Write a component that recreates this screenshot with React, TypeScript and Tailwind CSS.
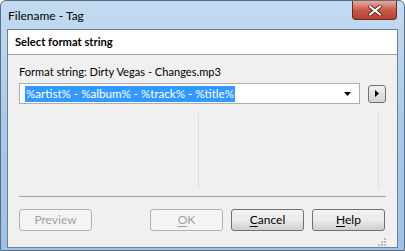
import React from "react";

const font = { fontFamily: 'Lato, "Noto Sans", "Liberation Sans", sans-serif' };

function Btn({ label, u, disabled }: { label: string; u?: number; disabled?: boolean }) {
  const pre = u === undefined ? label : label.slice(0, u);
  const mid = u === undefined ? "" : label[u];
  const post = u === undefined ? "" : label.slice(u + 1);
  return (
    <div
      className={
        "flex h-[22px] w-[73px] items-center justify-center rounded-[3px] border text-[12px] " +
        (disabled
          ? "border-[#adb2b5] bg-[#f4f4f4] text-[#a0a0a0]"
          : "border-[#707070] bg-gradient-to-b from-[#f2f2f2] via-[#ebebeb] to-[#cfcfcf] text-black")
      }
    >
      <span>
        {pre}
        {mid && <span className="underline underline-offset-2">{mid}</span>}
        {post}
      </span>
    </div>
  );
}

export default function App() {
  return (
    <div
      className="flex h-[251px] w-[405px] flex-col overflow-hidden rounded-t-[6px] border border-[#5a6e83] bg-gradient-to-b from-[#c3dbf1] via-[#a9c9e9] to-[#9ec2e6] px-[6px] pb-[2px]"
      style={font}
    >
      {/* Title bar */}
      <div className="flex h-[28px] shrink-0 items-start justify-between">
        <span className="mt-[6px] pl-[1px] text-[12px] text-black">Filename - Tag</span>
        <div className="mr-[1px] flex h-[19px] w-[45px] items-center justify-center rounded-b-[4px] border border-t-0 border-[#6b2a24] bg-gradient-to-b from-[#e9a99c] via-[#c75a48] to-[#b9412f]">
          <svg width="14" height="11" viewBox="0 0 14 11">
            <path d="M2 1.5 L12 9.5 M12 1.5 L2 9.5" stroke="#5a1d15" strokeWidth="3.6" strokeLinecap="round" />
            <path d="M2 1.5 L12 9.5 M12 1.5 L2 9.5" stroke="#ffffff" strokeWidth="2.2" strokeLinecap="round" />
          </svg>
        </div>
      </div>

      {/* Client area */}
      <div className="flex flex-1 flex-col border border-[#6e8193] bg-[#f0f0f0]">
        <div className="flex h-[25px] shrink-0 items-center border-b border-[#a0a0a0] bg-white pl-[7px] text-[11.2px] font-bold text-black">
          Select format string
        </div>

        <div className="flex flex-1 flex-col px-[11px] pt-[9px]">
          <div className="text-[11.1px] leading-[16px] text-black">
            Format string: Dirty Vegas - Changes.mp3
          </div>
          <div className="mt-[3px] flex items-center gap-[8px]">
            <div className="flex h-[21px] w-[341px] items-center border border-[#abadb3] bg-white pl-[5px] pr-[8px]">
              <span className="bg-[#3399ff] px-[1px] text-[11.6px] leading-[16px] text-white">
                %artist% - %album% - %track% - %title%
              </span>
              <span className="flex-1" />
              <svg width="7" height="4" viewBox="0 0 7 4">
                <path d="M0 0 H7 L3.5 4 Z" fill="#000" />
              </svg>
            </div>
            <div className="flex h-[18px] w-[18px] items-center justify-center rounded-[3px] border border-[#707070] bg-gradient-to-b from-[#f2f2f2] to-[#d4d4d4]">
              <svg width="4" height="7" viewBox="0 0 4 7">
                <path d="M0 0 V7 L4 3.5 Z" fill="#000" />
              </svg>
            </div>
          </div>

          <div className="mt-[9px] flex h-[76px] pl-[179px]">
            <div className="w-[180px] border-l border-[#dcdfe6]" />
            <div className="border-l border-[#dcdfe6]" />
          </div>

          <div className="mt-[7px] border-t border-[#a0a0a0]" />

          <div className="mt-[12px] flex items-center">
            <Btn label="Preview" disabled />
            <div className="flex-1" />
            <div className="flex gap-[8px] pr-[1px]">
              <Btn label="OK" u={0} disabled />
              <Btn label="Cancel" u={0} />
              <Btn label="Help" u={0} />
            </div>
          </div>
          <div className="flex flex-1 items-end justify-end pb-[1px]">
            <svg width="9" height="9" viewBox="0 0 9 9">
              <g fill="#b8bcc2">
                <rect x="7" y="1" width="2" height="2" />
                <rect x="4" y="4" width="2" height="2" />
                <rect x="7" y="4" width="2" height="2" />
                <rect x="1" y="7" width="2" height="2" />
                <rect x="4" y="7" width="2" height="2" />
                <rect x="7" y="7" width="2" height="2" />
              </g>
            </svg>
          </div>
        </div>
      </div>
    </div>
  );
}
